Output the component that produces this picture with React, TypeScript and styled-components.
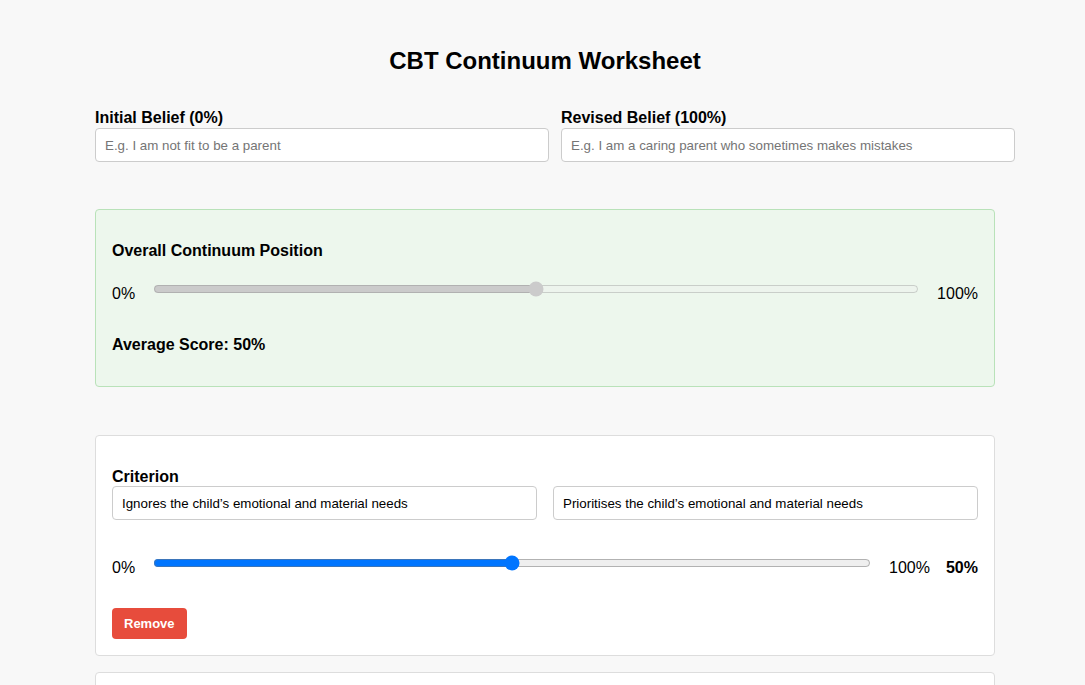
import React, { useState } from 'react';
import styled, { createGlobalStyle } from 'styled-components';

interface Criterion {
  id: number;
  left: string;
  right: string;
  value: number;
}

const GlobalStyle = createGlobalStyle`
  html, body {
    margin: 0;
    padding: 0;
    background: #f8f8f8;
    font-family: "Liberation Sans", Arial, sans-serif;
    color: #000;
  }
  * {
    box-sizing: border-box;
  }
`;

const Page = styled.div`
  padding: 0 0 40px 5px;
`;

const Container = styled.div`
  width: 900px;
  margin: 0 auto;
  padding-top: 47px;
`;

const Title = styled.h1`
  margin: 0 0 34px;
  font-size: 24px;
  font-weight: bold;
  text-align: center;
  line-height: 28px;
`;

const BeliefRow = styled.div`
  display: grid;
  grid-template-columns: 454px 454px;
  gap: 12px;
  margin-bottom: 47px;
`;

const Field = styled.div`
  display: flex;
  flex-direction: column;
`;

const FieldLabel = styled.label`
  font-size: 16px;
  font-weight: bold;
  line-height: 18px;
  margin-bottom: 1px;
`;

const TextInput = styled.input`
  width: 100%;
  height: 34px;
  padding: 0 9px;
  border: 1px solid #ccc;
  border-radius: 4px;
  background: #fff;
  font-family: "Liberation Sans", Arial, sans-serif;
  font-size: 13.33px;
  color: #000;
  outline: none;

  &::placeholder {
    color: #757575;
  }
`;

const Panel = styled.section<{ $summary?: boolean }>`
  border: 1px solid ${({ $summary }) => ($summary ? '#b9e2b9' : '#ddd')};
  background: ${({ $summary }) => ($summary ? '#edf7ed' : '#fff')};
  border-radius: 4px;
  padding: 16px;
  margin-bottom: ${({ $summary }) => ($summary ? '48px' : '16px')};
`;

const PanelTitle = styled.h3<{ $gap: number }>`
  margin: 16px 0 ${({ $gap }) => $gap}px;
  font-size: 16px;
  font-weight: bold;
  line-height: 18px;
`;

const SliderRow = styled.div<{ $after: number }>`
  display: flex;
  align-items: center;
  gap: 16px;
  font-size: 16px;
  line-height: 18px;
  margin-bottom: ${({ $after }) => $after}px;
`;

const Range = styled.input`
  flex: 1;
  min-width: 0;
  height: 16px;
  margin: 0 2px 10px;
`;

const Score = styled.span`
  font-weight: bold;
`;

const AverageText = styled.p`
  margin: 0 0 16px;
  font-size: 16px;
  font-weight: bold;
  line-height: 18px;
`;

const PairRow = styled.div`
  display: flex;
  gap: 16px;
  margin-bottom: 35px;
`;

const RemoveButton = styled.button`
  height: 31px;
  padding: 0 12px;
  border: none;
  border-radius: 4px;
  background: #e74c3c;
  color: #fff;
  font-family: "Liberation Sans", Arial, sans-serif;
  font-size: 13px;
  font-weight: bold;
  cursor: pointer;
`;

export default function App() {
  const [initial, setInitial] = useState('');
  const [revised, setRevised] = useState('');
  const [criteria, setCriteria] = useState<Criterion[]>([
    {
      id: 1,
      left: 'Ignores the child’s emotional and material needs',
      right: 'Prioritises the child’s emotional and material needs',
      value: 50,
    },
    { id: 2, left: '', right: '', value: 50 },
  ]);

  const average = criteria.length
    ? Math.round(criteria.reduce((s, c) => s + c.value, 0) / criteria.length)
    : 0;

  const update = (id: number, patch: Partial<Criterion>) =>
    setCriteria((list) => list.map((c) => (c.id === id ? { ...c, ...patch } : c)));

  return (
    <Page>
      <GlobalStyle />
      <Container>
        <Title>CBT Continuum Worksheet</Title>

        <BeliefRow>
          <Field>
            <FieldLabel>Initial Belief (0%)</FieldLabel>
            <TextInput
              placeholder="E.g. I am not fit to be a parent"
              value={initial}
              onChange={(e) => setInitial(e.target.value)}
            />
          </Field>
          <Field>
            <FieldLabel>Revised Belief (100%)</FieldLabel>
            <TextInput
              placeholder="E.g. I am a caring parent who sometimes makes mistakes"
              value={revised}
              onChange={(e) => setRevised(e.target.value)}
            />
          </Field>
        </BeliefRow>

        <Panel $summary>
          <PanelTitle $gap={21}>Overall Continuum Position</PanelTitle>
          <SliderRow $after={29}>
            <span>0%</span>
            <Range type="range" min={0} max={100} value={average} disabled readOnly />
            <span>100%</span>
          </SliderRow>
          <AverageText>Average Score: {average}%</AverageText>
        </Panel>

        {criteria.map((c) => (
          <Panel key={c.id}>
            <PanelTitle $gap={0}>Criterion</PanelTitle>
            <PairRow>
              <TextInput
                placeholder="Negative end"
                value={c.left}
                onChange={(e) => update(c.id, { left: e.target.value })}
              />
              <TextInput
                placeholder="Positive end"
                value={c.right}
                onChange={(e) => update(c.id, { right: e.target.value })}
              />
            </PairRow>
            <SliderRow $after={27}>
              <span>0%</span>
              <Range
                type="range"
                min={0}
                max={100}
                value={c.value}
                onChange={(e) => update(c.id, { value: Number(e.target.value) })}
              />
              <span>100%</span>
              <Score>{c.value}%</Score>
            </SliderRow>
            <RemoveButton onClick={() => setCriteria((l) => l.filter((x) => x.id !== c.id))}>
              Remove
            </RemoveButton>
          </Panel>
        ))}
      </Container>
    </Page>
  );
}
